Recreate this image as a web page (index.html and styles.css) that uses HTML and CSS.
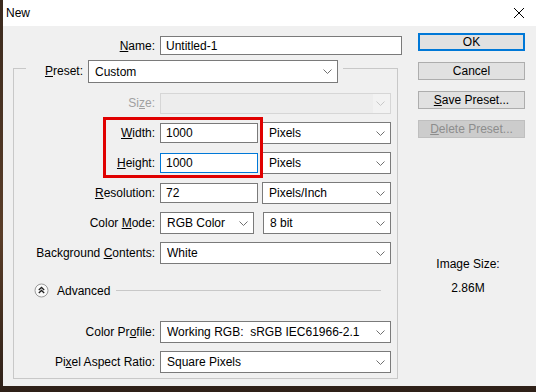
FILE: index.html
```html
<!DOCTYPE html>
<html lang="en">
<head>
<meta charset="UTF-8" />
<title>New</title>
<link rel="stylesheet" href="styles.css">
</head>
<body>
  <div class="dialog">
    <div class="titlebar">
      <span class="title">New</span>
      <svg class="close" width="12" height="12" viewBox="0 0 12 12"><path d="M1 1 L11 11 M11 1 L1 11" stroke="#000" stroke-width="1" fill="none"/></svg>
    </div>

    <div class="main">
      <div class="form">
        <div class="name-row">
          <label><u>N</u>ame:</label>
          <input class="text" type="text" value="Untitled-1">
        </div>

        <fieldset class="group">
          <legend>
            <div class="preset">
              <label><u>P</u>reset:</label>
              <select class="drop preset-drop"><option>Custom</option></select>
            </div>
          </legend>

          <div class="rows">
            <div class="mark"></div>

            <div class="row">
              <label class="dim">Si<u>z</u>e:</label>
              <select class="drop" disabled><option></option></select>
            </div>
            <div class="row">
              <label><u>W</u>idth:</label>
              <div class="pair">
                <input class="text" type="text" value="1000">
                <select class="drop"><option>Pixels</option></select>
              </div>
            </div>
            <div class="row">
              <label><u>H</u>eight:</label>
              <div class="pair">
                <input class="text focus" type="text" value="1000">
                <select class="drop"><option>Pixels</option></select>
              </div>
            </div>
            <div class="row">
              <label><u>R</u>esolution:</label>
              <div class="pair">
                <input class="text" type="text" value="72">
                <select class="drop"><option>Pixels/Inch</option></select>
              </div>
            </div>
            <div class="row">
              <label>Color <u>M</u>ode:</label>
              <div class="pair mode">
                <select class="drop"><option>RGB Color</option></select>
                <select class="drop"><option>8 bit</option></select>
              </div>
            </div>
            <div class="row">
              <label>Background <u>C</u>ontents:</label>
              <select class="drop"><option>White</option></select>
            </div>

            <div class="advanced">
              <svg class="toggle" width="15" height="15" viewBox="0 0 15 15">
                <circle cx="7.5" cy="7.5" r="6.5" fill="#fafafa" stroke="#9a9a9a"/>
                <path d="M4.8 7 L7.5 4.5 L10.2 7 M4.8 10 L7.5 7.5 L10.2 10" stroke="#222" stroke-width="1.3" fill="none"/>
              </svg>
              <span>Advanced</span>
              <div class="rule"></div>
            </div>

            <div class="row">
              <label>Color Pr<u>o</u>file:</label>
              <select class="drop"><option>Working RGB:&nbsp; sRGB IEC61966-2.1</option></select>
            </div>
            <div class="row">
              <label>Pi<u>x</u>el Aspect Ratio:</label>
              <select class="drop"><option>Square Pixels</option></select>
            </div>
          </div>
        </fieldset>
      </div>

      <div class="side">
        <div class="buttons">
          <button class="default">OK</button>
          <button>Cancel</button>
          <button><u>S</u>ave Preset...</button>
          <button disabled><u>D</u>elete Preset...</button>
        </div>
        <div class="image-size">
          <div>Image Size:</div>
          <div>2.86M</div>
        </div>
      </div>
    </div>
  </div>
</body>
</html>
```

FILE: styles.css
```css
body {
  margin: 0;
  height: 392px;
  overflow: hidden;
  background: linear-gradient(180deg, #3b2a1e, #5a3d28 60%, #2e2018);
  font-family: 'Liberation Sans', Arial, sans-serif;
  font-size: 12px;
  color: #000;
}

.dialog {
  margin-left: 3px;
  height: 386px;
  background: #f0f0f0;
  display: flex;
  flex-direction: column;
}

.titlebar {
  height: 25px;
  background: #fff;
  display: flex;
  align-items: center;
  justify-content: space-between;
  padding: 0 11px 1px 3px;
}
.title { font-size: 12px; }

.main {
  display: flex;
  padding-top: 10px;
}

/* left column */
.form {
  width: 386px;
  padding-left: 10px;
}

label { white-space: nowrap; text-align: right; }
label.dim { color: #a0a0a0; }

.name-row {
  display: grid;
  grid-template-columns: 142px 242px;
  column-gap: 5px;
  align-items: center;
  height: 19px;
}

.text {
  box-sizing: border-box;
  height: 20px;
  border: 1px solid #7a7a7a;
  background: #fff;
  font: inherit;
  padding: 0 5px;
  margin: 0;
  width: 100%;
  outline: none;
}
.name-row .text { height: 19px; }
.text.focus { border-color: #0078d7; }

.drop {
  -webkit-appearance: none;
  appearance: none;
  box-sizing: border-box;
  height: 22px;
  width: 100%;
  margin: 0;
  border: 1px solid #7a7a7a;
  border-radius: 0;
  padding: 0 20px 0 6px;
  font: inherit;
  color: #000;
  background: #fff url("data:image/svg+xml,%3Csvg xmlns='http://www.w3.org/2000/svg' width='9' height='5'%3E%3Cpath d='M0.5 0.5 L4.5 4.5 L8.5 0.5' stroke='%23707070' fill='none'/%3E%3C/svg%3E") no-repeat right 5px center;
  outline: none;
}
.drop:disabled {
  height: 21px;
  border-color: #cccccc;
  background-color: #ececec;
  background-image: url("data:image/svg+xml,%3Csvg xmlns='http://www.w3.org/2000/svg' width='9' height='5'%3E%3Cpath d='M0.5 0.5 L4.5 4.5 L8.5 0.5' stroke='%23b8b8b8' fill='none'/%3E%3C/svg%3E"), linear-gradient(90deg, #ececec calc(100% - 17px), #f3f3f3 calc(100% - 17px));
  background-repeat: no-repeat;
  background-position: right 5px center, 0 0;
}

.group {
  margin: 5px 0 0 0;
  padding: 0 6px 5px 0;
  width: 385px;
  box-sizing: border-box;
  border: 1px solid #c8c8c8;
  min-width: 0;
}

.group legend {
  margin-left: 12px;
  padding: 0 5px 0 0;
}
.preset {
  display: flex;
  align-items: flex-start;
  gap: 5px;
  height: 16px;
}
.preset label {
  width: 57px;
  line-height: 23px;
}
.preset-drop {
  width: 250px;
  height: 23px;
}

.rows {
  position: relative;
  display: flex;
  flex-direction: column;
  gap: 8px;
  margin-top: 16px;
}

.row {
  display: grid;
  grid-template-columns: 141px 231px;
  column-gap: 5px;
  align-items: center;
  height: 22px;
}

.pair {
  display: flex;
  align-items: center;
  gap: 4px;
}
.pair .text { width: 98px; flex: none; }
.pair .drop { flex: 1; }
.pair.mode { gap: 9px; }
.pair.mode .drop:first-child { width: 94px; flex: none; }

.mark {
  position: absolute;
  left: 89px;
  top: 25px;
  width: 160px;
  height: 61px;
  box-sizing: border-box;
  border: 3px solid #e00000;
  pointer-events: none;
}

.advanced {
  display: flex;
  align-items: center;
  height: 15px;
  margin: 11px 0 15px;
  padding: 0 10px 0 20px;
}
.toggle { flex: none; }
.advanced span { margin-left: 8px; }
.rule {
  flex: 1;
  height: 1px;
  background: #c8c8c8;
  margin-left: 6px;
}

/* right column */
.side {
  width: 107px;
  margin-left: 19px;
}
.buttons {
  display: flex;
  flex-direction: column;
  gap: 11px;
  margin-top: -3px;
}
button {
  box-sizing: border-box;
  height: 18px;
  width: 107px;
  padding: 0;
  margin: 0;
  font: inherit;
  color: #000;
  background: #e1e1e1;
  border: 1px solid #adadad;
  border-radius: 0;
}
button.default {
  border: 2px solid #0078d7;
}
button:disabled {
  color: #8d8d8d;
  background: #cccccc;
  border-color: #bfbfbf;
}

.image-size {
  margin-top: 118px;
  padding-right: 7px;
  display: flex;
  flex-direction: column;
  align-items: center;
  gap: 8px;
  line-height: 16px;
}
```
